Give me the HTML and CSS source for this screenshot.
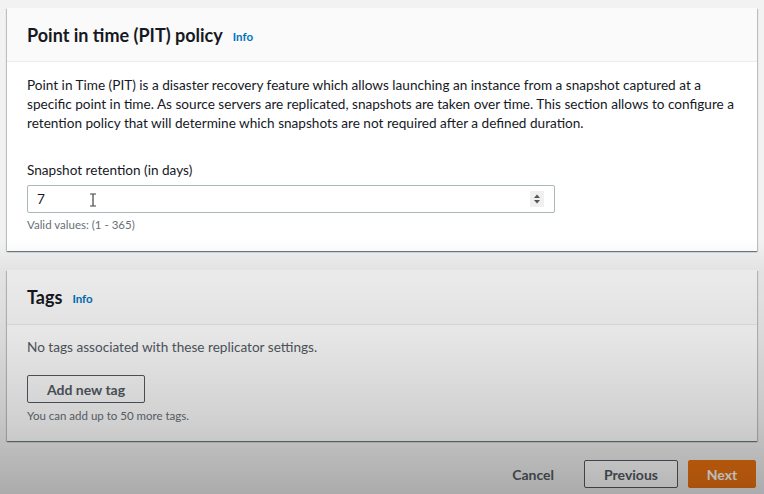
FILE: index.html
```html
<!DOCTYPE html>
<html lang="en">
<head>
<meta charset="utf-8">
<link rel="stylesheet" href="styles.css">
</head>
<body>
<main class="page">
  <section class="card">
    <header class="card-header">
      <h2 class="card-title">Point in time (PIT) policy</h2>
      <a class="info">Info</a>
    </header>
    <div class="card-body pit-body">
      <p class="desc">Point in Time (PIT) is a disaster recovery feature which allows launching an instance from a snapshot captured at a specific point in time. As source servers are replicated, snapshots are taken over time. This section allows to configure a retention policy that will determine which snapshots are not required after a defined duration.</p>
      <div class="field">
        <label class="label">Snapshot retention (in days)</label>
        <div class="input">
          <span class="value">7</span>
          <svg class="ibeam" width="8" height="14" viewBox="0 0 8 14"><path d="M1 1h6M4 1v12M1 13h6" stroke="#444" stroke-width="1.2" fill="none"/></svg>
          <span class="spin"><svg width="8" height="12" viewBox="0 0 8 12"><path d="M4 1.5L7 5H1z M4 10.5L1 7h6z" fill="#555"/></svg></span>
        </div>
        <div class="hint">Valid values: (1 - 365)</div>
      </div>
    </div>
  </section>

  <section class="card">
    <header class="card-header tags-header">
      <h2 class="card-title">Tags</h2>
      <a class="info">Info</a>
    </header>
    <div class="card-body tags-body">
      <p class="empty">No tags associated with these replicator settings.</p>
      <button class="btn">Add new tag</button>
      <div class="hint">You can add up to 50 more tags.</div>
    </div>
  </section>

  <footer class="actions">
    <button class="link-btn">Cancel</button>
    <button class="btn btn-prev">Previous</button>
    <button class="btn btn-primary">Next</button>
  </footer>
</main>
<div class="shade"></div>
</body>
</html>
```

FILE: styles.css
```css
* { box-sizing: border-box; }
html, body { margin: 0; height: 100%; }
body {
  background: #f2f2f2;
  font-family: "Lato", "Open Sans", sans-serif;
  color: #16191f;
  overflow: hidden;
}
.page {
  padding: 8px 7px 0 7px;
  display: flex;
  flex-direction: column;
  gap: 19px;
}
.card {
  background: #fff;
  box-shadow: 0 1px 1px 0 rgba(0,28,36,.35), 1px 1px 1px 0 rgba(0,28,36,.18), -1px 1px 1px 0 rgba(0,28,36,.18);
}
.card-header {
  height: 54px;
  background: #fafafa;
  border-bottom: 1px solid #eaeded;
  display: flex;
  align-items: center;
  padding: 0 20px;
  gap: 10px;
}
.tags-header { height: 55px; }
.card-title {
  margin: 0;
  font-size: 18px;
  font-weight: 700;
}
.info {
  color: #0073bb;
  font-size: 11.5px;
  font-weight: 700;
  padding-top: 3px;
}
.card-body { padding: 14px 20px 20px 20px; }
.desc {
  margin: 0;
  font-size: 13.6px;
  line-height: 19px;
}
.field { margin-top: 28px; }
.label {
  display: block;
  font-size: 13.6px;
  line-height: 19px;
}
.input {
  margin-top: 5px;
  width: 528px;
  height: 28px;
  border: 1px solid #aab7b8;
  border-radius: 2px;
  display: flex;
  align-items: center;
  padding: 0 10px 0 9px;
  position: relative;
}
.value { font-size: 13.6px; }
.ibeam { position: absolute; left: 61px; top: 7px; }
.spin {
  margin-left: auto;
  width: 14px;
  height: 16px;
  background: #f0f0f0;
  display: flex;
  align-items: center;
  justify-content: center;
}
.hint {
  margin-top: 5px;
  font-size: 11.5px;
  color: #687078;
}
.tags-body { padding: 13px 20px 19px 20px; }
.empty {
  margin: 0;
  font-size: 13.6px;
  line-height: 19px;
  color: #545b64;
}
.btn {
  font-family: inherit;
  font-size: 14px;
  font-weight: 700;
  color: #545b64;
  background: #fff;
  border: 1px solid #545b64;
  border-radius: 2px;
  height: 28px;
  padding: 0 18px;
  white-space: nowrap;
  cursor: pointer;
}
.tags-body .btn { display: block; margin-top: 18px; width: 118px; padding: 0; }
.tags-body .hint { margin-top: 6px; }
.actions {
  display: flex;
  justify-content: flex-end;
  align-items: center;
  gap: 10px;
  margin-top: 0;
  padding-right: 1px;
}
.link-btn {
  font-family: inherit;
  font-size: 14px;
  font-weight: 700;
  color: #545b64;
  background: none;
  border: none;
  padding: 0 20px;
  height: 28px;
}
.btn-prev { width: 94px; padding: 0; }
.btn-primary {
  width: 68px;
  padding: 0;
  background: #ec7211;
  border-color: #ec7211;
  color: #fff;
}
.shade {
  position: fixed;
  inset: 0;
  pointer-events: none;
  background: linear-gradient(to bottom,
    rgba(0,0,0,0) 0px,
    rgba(0,0,0,0) 240px,
    rgba(0,0,0,0.06) 270px,
    rgba(0,0,0,0.1) 340px,
    rgba(0,0,0,0.18) 420px,
    rgba(0,0,0,0.29) 494px);
}
```
